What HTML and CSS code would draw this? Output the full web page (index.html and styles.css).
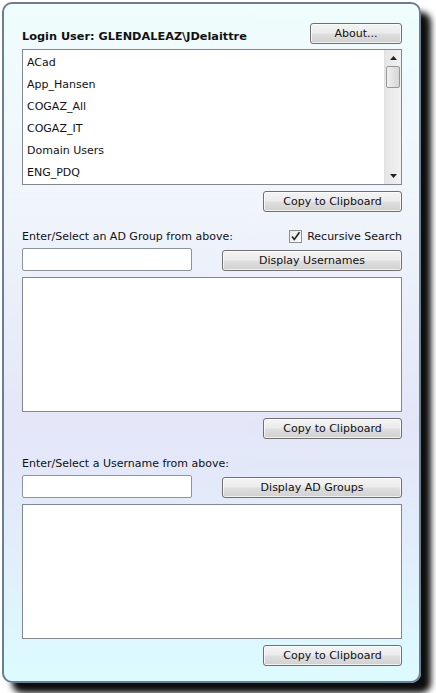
FILE: index.html
```html
<!DOCTYPE html>
<html>
<head>
<meta charset="utf-8">
<link rel="stylesheet" href="styles.css">
</head>
<body>
<div class="window">
  <div class="header">
    <span class="login">Login User: GLENDALEAZ\JDelaittre</span>
    <button class="btn about">About...</button>
  </div>
  <div class="listbox">
    <ul class="items">
      <li>ACad</li>
      <li>App_Hansen</li>
      <li>COGAZ_All</li>
      <li>COGAZ_IT</li>
      <li>Domain Users</li>
      <li>ENG_PDQ</li>
    </ul>
    <div class="scrollbar">
      <div class="arrow"><svg width="7" height="4" viewBox="0 0 7 4"><path d="M0 4 L3.5 0 L7 4 Z" fill="#222"/></svg></div>
      <div class="thumb"></div>
      <div class="track"></div>
      <div class="arrow"><svg width="7" height="4" viewBox="0 0 7 4"><path d="M0 0 L3.5 4 L7 0 Z" fill="#222"/></svg></div>
    </div>
  </div>
  <div class="right-row"><button class="btn copy">Copy to Clipboard</button></div>

  <div class="label-row">
    <span>Enter/Select an AD Group from above:</span>
    <label class="check"><span class="box"><svg width="11" height="11" viewBox="0 0 11 11"><path d="M2 5.5 L4.3 8.5 L9.5 1.2" fill="none" stroke="#222" stroke-width="1.6"/></svg></span>Recursive Search</label>
  </div>
  <div class="input-row">
    <input class="text" type="text">
    <button class="btn wide">Display Usernames</button>
  </div>
  <div class="area"></div>
  <div class="right-row"><button class="btn copy">Copy to Clipboard</button></div>

  <div class="label-row second">
    <span>Enter/Select a Username from above:</span>
  </div>
  <div class="input-row">
    <input class="text" type="text">
    <button class="btn wide">Display AD Groups</button>
  </div>
  <div class="area"></div>
  <div class="right-row"><button class="btn copy">Copy to Clipboard</button></div>
</div>
</body>
</html>
```
FILE: styles.css
```css
html, body {
  margin: 0;
  padding: 0;
  background: #ffffff;
}
body {
  width: 436px;
  height: 693px;
  overflow: hidden;
  font-family: "DejaVu Sans", Tahoma, sans-serif;
  font-size: 11px;
  color: #111;
}
.window {
  box-sizing: border-box;
  margin: 2px 0 0 2px;
  width: 419px;
  height: 681px;
  border: 2px solid #6c7f90;
  border-radius: 10px;
  box-shadow: 10px 10px 6px rgba(0, 0, 0, 0.95);
  background: linear-gradient(to bottom, #effdfd 0%, #f0f5fb 30%, #e4e6f8 62%, #e2ecfb 78%, #dcfbff 100%);
  padding: 19px 17px 0 18px;
  display: flex;
  flex-direction: column;
}
.header {
  display: flex;
  justify-content: space-between;
  align-items: center;
  height: 21px;
}
.login {
  font-weight: bold;
  font-size: 11.3px;
  padding-top: 5px;
}
.btn {
  box-sizing: border-box;
  height: 21px;
  margin: 0;
  padding: 0;
  font-family: inherit;
  font-size: 11px;
  color: #111;
  border: 1px solid #707070;
  border-radius: 3px;
  background: linear-gradient(to bottom, #f4f4f4 0%, #ececec 45%, #dedede 55%, #d0d0d0 100%);
  box-shadow: inset 0 0 0 1px rgba(255, 255, 255, 0.7);
}
.about { width: 92px; }
.copy { width: 139px; }
.wide { width: 180px; }
.listbox {
  box-sizing: border-box;
  margin-top: 5px;
  height: 136px;
  border: 1px solid #828790;
  background: #fff;
  display: flex;
}
.items {
  list-style: none;
  margin: 0;
  padding: 2px 0 0 0;
  flex: 1;
  overflow: hidden;
}
.items li {
  height: 22px;
  line-height: 22px;
  padding-left: 4px;
}
.scrollbar {
  width: 16px;
  display: flex;
  flex-direction: column;
  background: linear-gradient(to right, #e5e5e5, #f2f2f2);
  border-left: 1px solid #e0e0e0;
}
.arrow {
  height: 16px;
  display: flex;
  align-items: center;
  justify-content: center;
}
.thumb {
  box-sizing: border-box;
  height: 22px;
  margin: 0 1px;
  border: 1px solid #979797;
  border-radius: 2px;
  background: linear-gradient(to right, #f0f0f0, #e2e2e2 50%, #d6d6d6);
}
.track { flex: 1; }
.right-row {
  display: flex;
  justify-content: flex-end;
  margin-top: 6px;
}
.label-row {
  margin-top: 17px;
  height: 14px;
  display: flex;
  justify-content: space-between;
  align-items: center;
}
.check {
  display: flex;
  align-items: center;
  gap: 5px;
}
.box {
  box-sizing: border-box;
  width: 13px;
  height: 13px;
  border: 1px solid #8e8f8f;
  background: linear-gradient(to bottom right, #e8e8e8, #fbfbfb);
  display: flex;
  align-items: center;
  justify-content: center;
}
.input-row {
  margin-top: 5px;
  display: flex;
  justify-content: space-between;
  align-items: flex-end;
}
.text {
  box-sizing: border-box;
  width: 170px;
  height: 23px;
  margin: 0;
  border: 1px solid #8b939c;
  border-radius: 2px;
  background: #fff;
}
.area {
  box-sizing: border-box;
  margin-top: 6px;
  height: 135px;
  border: 1px solid #828790;
  background: #fff;
}
```
